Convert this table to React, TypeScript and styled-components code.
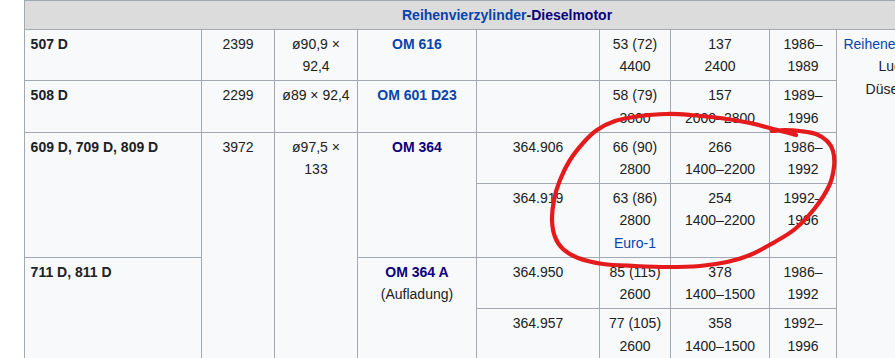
import React from "react";
import styled, { createGlobalStyle } from "styled-components";

const GlobalStyle = createGlobalStyle`
  html, body { margin: 0; padding: 0; background: #ffffff; }
  body { font-family: "Liberation Sans", Arial, sans-serif; }
`;

const Page = styled.div`
  position: relative;
  width: 895px;
  height: 358px;
  overflow: hidden;
  padding-left: 24px;
  box-sizing: border-box;
  background: #ffffff;
`;

const Table = styled.table`
  border-collapse: collapse;
  table-layout: fixed;
  width: 965px;
  background: #f8f9fa;
  color: #202122;
  font-size: 14px;
  line-height: 22.4px;
  border: 1px solid #a2a9b1;
`;

const HeadCell = styled.th`
  background: #dcdcdc;
  border: 1px solid #a2a9b1;
  padding: 2.8px 5.6px;
  text-align: center;
  font-weight: bold;
`;

const Cell = styled.td<{ $align?: "left" | "center"; $bold?: boolean }>`
  border: 1px solid #a2a9b1;
  padding: 2.8px 5.6px;
  vertical-align: top;
  text-align: ${(p) => p.$align ?? "center"};
  font-weight: ${(p) => (p.$bold ? "bold" : "normal")};
  white-space: normal;
`;

const NoteCell = styled.td`
  border: 1px solid #a2a9b1;
  padding: 2.8px 5.6px;
  vertical-align: top;
  text-align: center;
  white-space: nowrap;
`;

const Link = styled.a<{ $visited?: boolean }>`
  color: ${(p) => (p.$visited ? "#0b0080" : "#0645ad")};
  text-decoration: none;
`;

const Overlay = styled.svg`
  position: absolute;
  left: 0;
  top: 0;
  pointer-events: none;
`;

const colWidths = [177, 73, 83, 119, 123, 71, 99, 67, 153];

type Pt = [number, number];

const circlePts: Pt[] = [
  [796, 135], [785, 132], [773, 129], [750, 123], [720, 118], [690, 115],
  [667, 114], [640, 116], [615, 121], [597, 130], [584, 142], [570, 160],
  [560, 180], [554, 200], [552, 220], [555, 237], [563, 249], [578, 258],
  [603, 264], [635, 266], [668, 267], [700, 266], [727, 262], [750, 255],
  [773, 243], [795, 229], [815, 208], [829, 186], [834, 167], [833, 151],
  [827, 141], [816, 134], [800, 131], [785, 130], [772, 131],
];

function smoothPath(pts: Pt[]): string {
  let d = `M ${pts[0][0]} ${pts[0][1]}`;
  for (let i = 0; i < pts.length - 1; i++) {
    const p0 = pts[i - 1] ?? pts[i];
    const p1 = pts[i];
    const p2 = pts[i + 1];
    const p3 = pts[i + 2] ?? p2;
    const c1x = p1[0] + (p2[0] - p0[0]) / 6;
    const c1y = p1[1] + (p2[1] - p0[1]) / 6;
    const c2x = p2[0] - (p3[0] - p1[0]) / 6;
    const c2y = p2[1] - (p3[1] - p1[1]) / 6;
    d += ` C ${c1x.toFixed(1)} ${c1y.toFixed(1)}, ${c2x.toFixed(1)} ${c2y.toFixed(1)}, ${p2[0]} ${p2[1]}`;
  }
  return d;
}

export default function App() {
  return (
    <>
      <GlobalStyle />
      <Page>
        <Table>
          <colgroup>
            {colWidths.map((w, i) => (
              <col key={i} style={{ width: w }} />
            ))}
          </colgroup>
          <tbody>
            <tr>
              <HeadCell colSpan={9}>
                <Link href="#">Reihenvierzylinder</Link>-
                <Link href="#" $visited>Dieselmotor</Link>
              </HeadCell>
            </tr>
            <tr>
              <Cell $align="left" $bold>507 D</Cell>
              <Cell>2399</Cell>
              <Cell>ø90,9 × 92,4</Cell>
              <Cell $bold><Link href="#">OM 616</Link></Cell>
              <Cell></Cell>
              <Cell>53 (72)<br />4400</Cell>
              <Cell>137<br />2400</Cell>
              <Cell>1986–<br />1989</Cell>
              <NoteCell rowSpan={6}>
                <Link href="#">Reiheneinspritzpumpe</Link>
                <br />Lucas CAV
                <br />Düsenhalter 18
              </NoteCell>
            </tr>
            <tr>
              <Cell $align="left" $bold>508 D</Cell>
              <Cell>2299</Cell>
              <Cell>ø89 × 92,4</Cell>
              <Cell $bold><Link href="#">OM 601 D23</Link></Cell>
              <Cell></Cell>
              <Cell>58 (79)<br />3800</Cell>
              <Cell>157<br />2000–2800</Cell>
              <Cell>1989–<br />1996</Cell>
            </tr>
            <tr>
              <Cell $align="left" $bold rowSpan={2}>609 D, 709 D, 809 D</Cell>
              <Cell rowSpan={4}>3972</Cell>
              <Cell rowSpan={4}>ø97,5 × 133</Cell>
              <Cell $bold rowSpan={2}><Link href="#" $visited>OM 364</Link></Cell>
              <Cell>364.906</Cell>
              <Cell>66 (90)<br />2800</Cell>
              <Cell>266<br />1400–2200</Cell>
              <Cell>1986–<br />1992</Cell>
            </tr>
            <tr>
              <Cell>364.919</Cell>
              <Cell>63 (86)<br />2800<br /><Link href="#">Euro-1</Link></Cell>
              <Cell>254<br />1400–2200</Cell>
              <Cell>1992–<br />1996</Cell>
            </tr>
            <tr>
              <Cell $align="left" $bold rowSpan={2}>711 D, 811 D</Cell>
              <Cell rowSpan={2}>
                <b><Link href="#" $visited>OM 364 A</Link></b>
                <br />(Aufladung)
              </Cell>
              <Cell>364.950</Cell>
              <Cell>85 (115)<br />2600</Cell>
              <Cell>378<br />1400–1500</Cell>
              <Cell>1986–<br />1992</Cell>
            </tr>
            <tr>
              <Cell>364.957</Cell>
              <Cell>77 (105)<br />2600</Cell>
              <Cell>358<br />1400–1500</Cell>
              <Cell>1992–<br />1996</Cell>
            </tr>
          </tbody>
        </Table>
        <Overlay width={895} height={358} viewBox="0 0 895 358">
          <path
            d={smoothPath(circlePts)}
            fill="none"
            stroke="#e41a1c"
            strokeWidth={4.2}
            strokeLinecap="round"
            strokeLinejoin="round"
          />
        </Overlay>
      </Page>
    </>
  );
}
